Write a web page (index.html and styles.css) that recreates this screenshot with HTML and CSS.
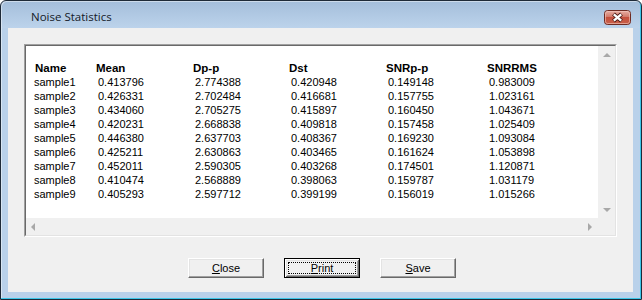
FILE: index.html
```html
<!DOCTYPE html>
<html>
<head>
<meta charset="utf-8">
<link rel="stylesheet" href="styles.css">
</head>
<body>
<div class="window">
  <div class="titlebar">
    <span class="title">Noise Statistics</span>
    <svg class="close" width="27" height="15" viewBox="0 0 27 15">
      <defs>
        <linearGradient id="cg" x1="0" y1="0" x2="0" y2="1">
          <stop offset="0" stop-color="#e9b2a8"/>
          <stop offset="0.45" stop-color="#d27a6a"/>
          <stop offset="0.5" stop-color="#c5503d"/>
          <stop offset="1" stop-color="#c9624c"/>
        </linearGradient>
      </defs>
      <rect x="0.5" y="0.5" width="26" height="14" rx="3" fill="url(#cg)" stroke="#6e2b22"/>
      <rect x="1.5" y="1.5" width="24" height="12" rx="2" fill="none" stroke="#f3c9c0" stroke-opacity="0.6"/>
      <path d="M9.5 4 L17.5 11 M17.5 4 L9.5 11" stroke="#4b1a14" stroke-width="4.2"/>
      <path d="M9.8 4.3 L17.2 10.7 M17.2 4.3 L9.8 10.7" stroke="#ffffff" stroke-width="2.4"/>
    </svg>
  </div>
  <div class="client">
    <div class="listbox">
      <div class="listbox-inner">
        <div class="content">
          <div class="table">
            <span class="th">Name</span><span class="th">Mean</span><span class="th">Dp-p</span><span class="th">Dst</span><span class="th">SNRp-p</span><span class="th">SNRRMS</span>
            <span class="name">sample1</span><span class="num">0.413796</span><span class="num">2.774388</span><span class="num">0.420948</span><span class="num">0.149148</span><span class="num">0.983009</span>
            <span class="name">sample2</span><span class="num">0.426331</span><span class="num">2.702484</span><span class="num">0.416681</span><span class="num">0.157755</span><span class="num">1.023161</span>
            <span class="name">sample3</span><span class="num">0.434060</span><span class="num">2.705275</span><span class="num">0.415897</span><span class="num">0.160450</span><span class="num">1.043671</span>
            <span class="name">sample4</span><span class="num">0.420231</span><span class="num">2.668838</span><span class="num">0.409818</span><span class="num">0.157458</span><span class="num">1.025409</span>
            <span class="name">sample5</span><span class="num">0.446380</span><span class="num">2.637703</span><span class="num">0.408367</span><span class="num">0.169230</span><span class="num">1.093084</span>
            <span class="name">sample6</span><span class="num">0.425211</span><span class="num">2.630863</span><span class="num">0.403465</span><span class="num">0.161624</span><span class="num">1.053898</span>
            <span class="name">sample7</span><span class="num">0.452011</span><span class="num">2.590305</span><span class="num">0.403268</span><span class="num">0.174501</span><span class="num">1.120871</span>
            <span class="name">sample8</span><span class="num">0.410474</span><span class="num">2.568889</span><span class="num">0.398063</span><span class="num">0.159787</span><span class="num">1.031179</span>
            <span class="name">sample9</span><span class="num">0.405293</span><span class="num">2.597712</span><span class="num">0.399199</span><span class="num">0.156019</span><span class="num">1.015266</span>
          </div>
        </div>
        <div class="vscroll">
          <span class="arrow up"></span>
          <span class="arrow down"></span>
        </div>
        <div class="hscroll">
          <span class="arrow left"></span>
          <span class="arrow right"></span>
        </div>
        <div class="corner"></div>
      </div>
    </div>
    <div class="buttons">
      <button type="button" class="btn"><u>C</u>lose</button>
      <button type="button" class="btn default"><span class="focus"><u>P</u>rint</span></button>
      <button type="button" class="btn"><u>S</u>ave</button>
    </div>
  </div>
</div>
</body>
</html>
```

FILE: styles.css
```css
html, body {
  margin: 0;
  padding: 0;
  background: #ffffff;
}

.window {
  width: 642px;
  height: 300px;
  box-sizing: border-box;
  border: 1px solid #1e2a38;
  border-radius: 6px 6px 0 0;
  background: linear-gradient(to bottom, #a4bedb 0, #bcd3eb 27px, #b9d1ea 27px);
  box-shadow: inset -1px -1px 0 #3cc6e8, inset 1px 1px 0 rgba(255, 255, 255, 0.45);
  display: flex;
  flex-direction: column;
  font-family: "Liberation Sans", Arial, sans-serif;
  overflow: hidden;
}

.titlebar {
  height: 27px;
  flex: none;
  display: flex;
  justify-content: space-between;
  align-items: flex-start;
  padding: 0 10px 0 30px;
}

.title {
  font-family: "Open Sans", "Noto Sans", sans-serif;
  font-size: 11.5px;
  line-height: 18px;
  margin-top: 7px;
  color: #141a28;
}

.close {
  display: block;
  margin-top: 9px;
}

.client {
  flex: 1;
  margin: 0 8px 7px 7px;
  background: #f0f0f0;
  padding: 16px 16px 14px 16px;
  display: flex;
  flex-direction: column;
}

.listbox {
  height: 193px;
  box-sizing: border-box;
  border: 1px solid;
  border-color: #a0a0a0 #ffffff #ffffff #a0a0a0;
}

.listbox-inner {
  height: 100%;
  box-sizing: border-box;
  border: 1px solid;
  border-color: #696969 #e3e3e3 #e3e3e3 #696969;
  background: #ffffff;
  display: grid;
  grid-template-columns: 1fr 17px;
  grid-template-rows: 1fr 17px;
}

.content {
  padding: 15px 0 0 9px;
  overflow: hidden;
}

.table {
  display: grid;
  grid-template-columns: 61px 97px 96px 97px 101px 100px;
  grid-auto-rows: 14px;
  line-height: 14px;
  font-size: 11px;
  color: #000000;
  white-space: nowrap;
}

.th {
  font-weight: bold;
  font-size: 11.5px;
}

.name {
  margin-left: -1px;
}

.num {
  padding-left: 2px;
}

.vscroll {
  background: #f0f0f0;
  display: flex;
  flex-direction: column;
  justify-content: space-between;
  align-items: center;
  padding: 7px 0 6px 0;
}

.hscroll {
  background: #f0f0f0;
  display: flex;
  justify-content: space-between;
  align-items: center;
  padding: 0 6px 0 5px;
}

.corner {
  background: #f0f0f0;
}

.arrow {
  width: 0;
  height: 0;
  display: block;
}

.arrow.up {
  border-left: 4px solid transparent;
  border-right: 4px solid transparent;
  border-bottom: 4px solid #a8a8a8;
}

.arrow.down {
  border-left: 4px solid transparent;
  border-right: 4px solid transparent;
  border-top: 4px solid #a8a8a8;
}

.arrow.left {
  border-top: 4px solid transparent;
  border-bottom: 4px solid transparent;
  border-right: 4px solid #a8a8a8;
}

.arrow.right {
  border-top: 4px solid transparent;
  border-bottom: 4px solid transparent;
  border-left: 4px solid #a8a8a8;
}

.buttons {
  margin-top: auto;
  display: flex;
  justify-content: center;
  gap: 20px;
  padding-left: 3px;
}

.btn {
  width: 76px;
  height: 20px;
  box-sizing: border-box;
  margin: 0;
  padding: 0;
  background: #f0f0f0;
  border: 1px solid;
  border-color: #ffffff #696969 #696969 #ffffff;
  box-shadow: inset -1px -1px 0 #a0a0a0, inset 1px 1px 0 #e3e3e3;
  border-radius: 0;
  font-family: "Liberation Sans", Arial, sans-serif;
  font-size: 11px;
  color: #000000;
  display: flex;
  align-items: center;
  justify-content: center;
}

.btn u {
  text-decoration: underline;
}

.btn.default {
  border: 1px solid #000000;
  box-shadow: inset 1px 1px 0 #ffffff, inset -1px -1px 0 #696969, inset 2px 2px 0 #e3e3e3, inset -2px -2px 0 #a0a0a0;
  align-items: stretch;
  justify-content: stretch;
}

.focus {
  flex: 1;
  margin: 3px;
  border: 1px dotted #000000;
  display: flex;
  align-items: center;
  justify-content: center;
}
```
